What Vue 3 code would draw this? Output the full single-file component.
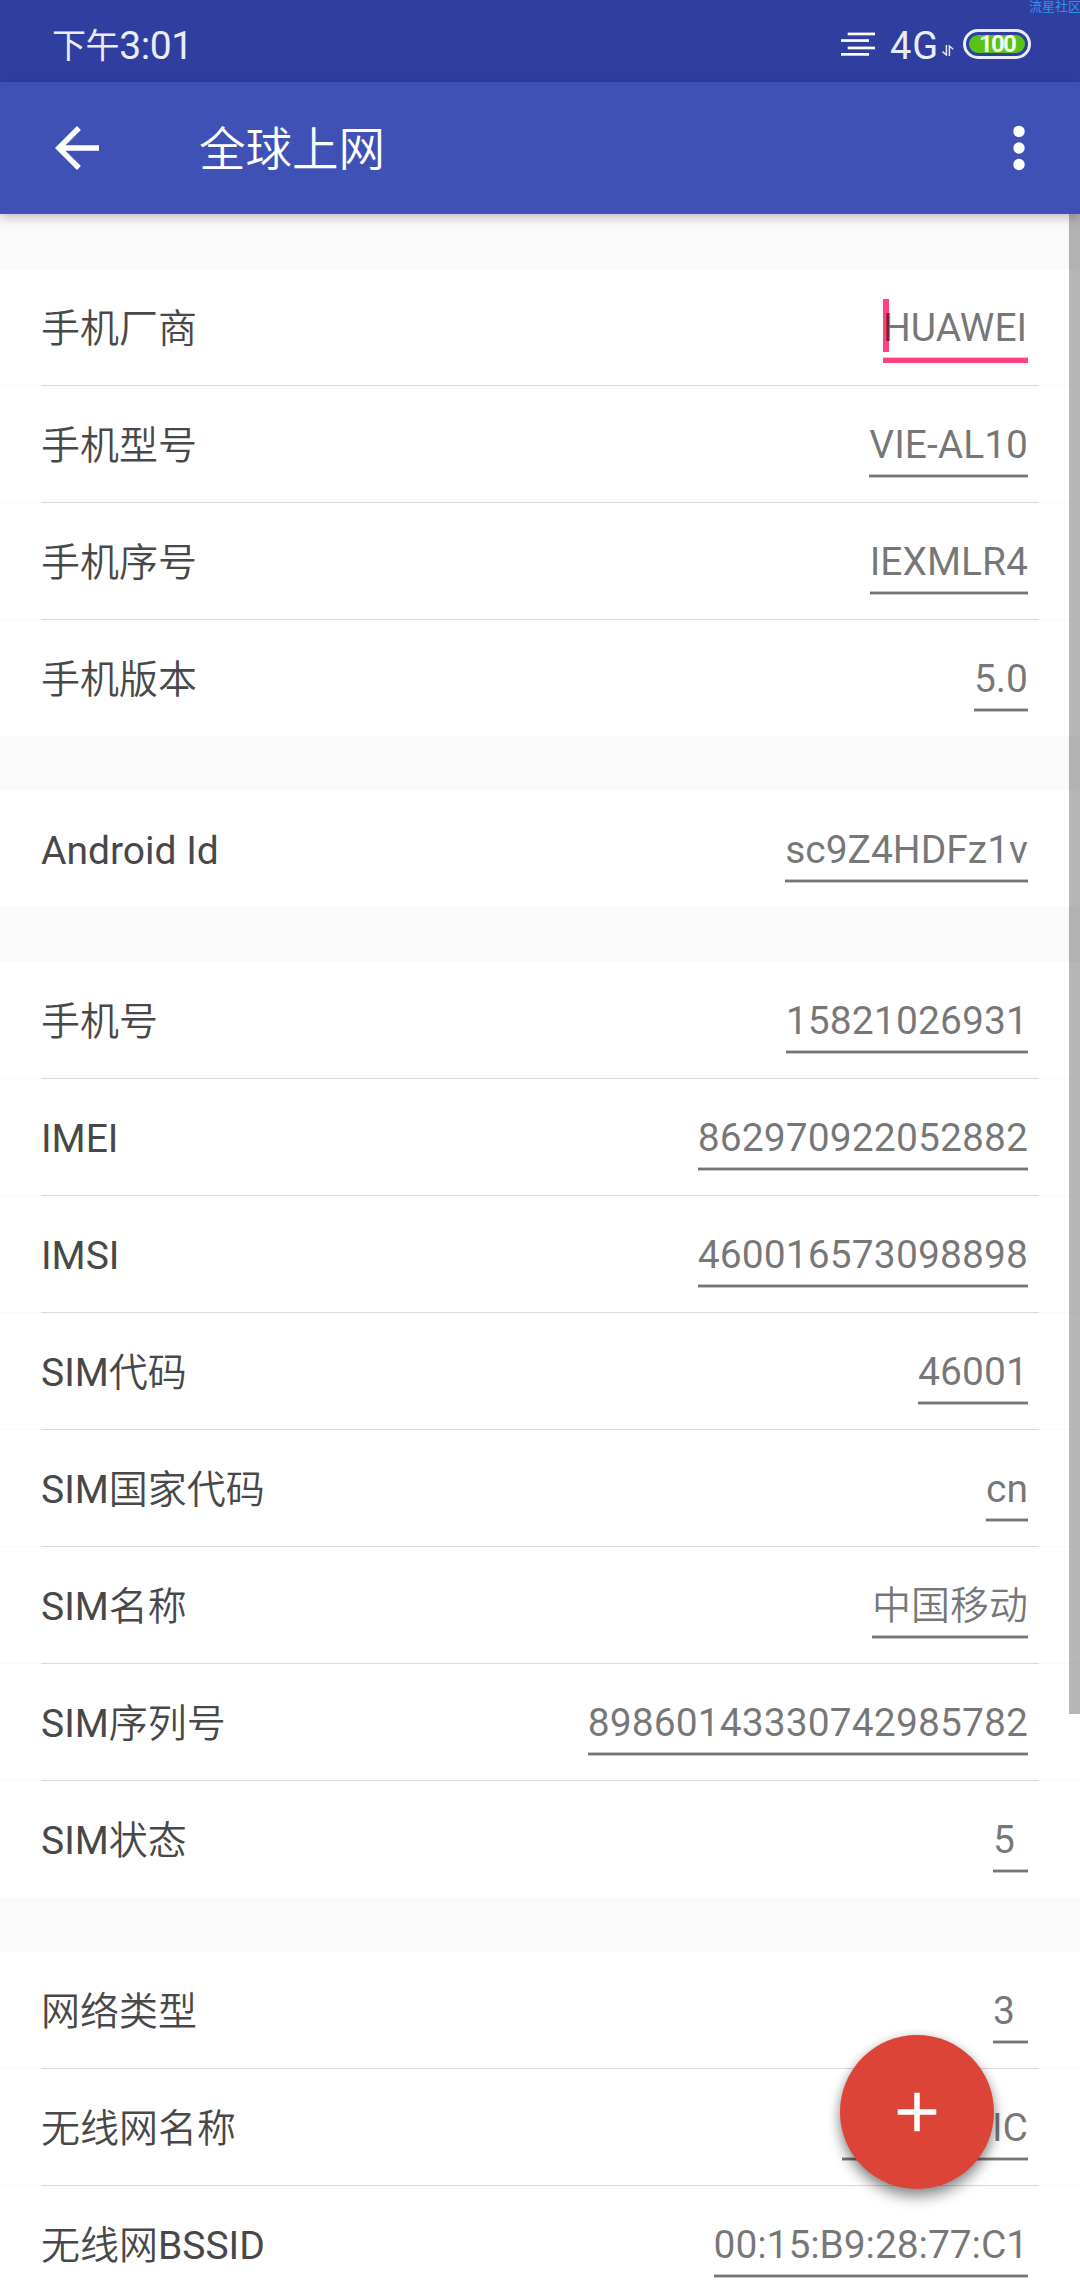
<template>
  <div class="screen">
    <header class="status-bar">
      <div class="clock"><span class="clock-cn">下午</span><span>3:01</span></div>
      <div class="status-icons">
        <svg class="icon-lines" width="34" height="24" viewBox="0 0 34 24" fill="#fff">
          <rect x="6.7" y="0.6" width="27.3" height="2.7" />
          <rect x="0" y="7.2" width="28" height="2.7" />
          <rect x="6.7" y="14.6" width="27.3" height="2.7" />
          <rect x="0" y="21" width="28" height="2.7" />
        </svg>
        <span class="network">4G</span>
        <svg class="icon-data" width="12" height="11" viewBox="0 0 12 11" fill="none" stroke="#e4e6f5" stroke-width="1.5">
          <path d="M4.4 0v10L0.6 6.6M7.4 11V1L11.2 4.2" />
        </svg>
        <div class="battery"><span>100</span></div>
      </div>
      <span class="watermark">流星社区</span>
    </header>

    <nav class="app-bar">
      <button type="button" class="icon-btn" aria-label="Back">
        <svg width="66" height="66" viewBox="0 0 24 24" fill="#fff">
          <path d="M20 11H7.83l5.59-5.59L12 4l-8 8 8 8 1.41-1.41L7.83 13H20v-2z" />
        </svg>
      </button>
      <h1 class="title">全球上网</h1>
      <button type="button" class="icon-btn" aria-label="More">
        <svg width="66" height="66" viewBox="0 0 66 66" fill="#fff">
          <circle cx="33" cy="16.4" r="5.7" />
          <circle cx="33" cy="33" r="5.7" />
          <circle cx="33" cy="49.5" r="5.7" />
        </svg>
      </button>
    </nav>

    <main class="content">
      <section v-for="(group, i) in groups" :key="i" class="group">
        <div v-for="item in group" :key="item.label" class="row">
          <label class="label">{{ item.label }}</label>
          <div class="field" :class="{ focused: item.focused, covered: item.covered }">
            <span class="value" :class="{ numeric: isNumeric(item.value), mac: item.value.includes(':') }">{{ item.value }}</span>
          </div>
        </div>
      </section>
      <div class="scrollbar"></div>
    </main>

    <button type="button" class="fab" aria-label="Add">
      <svg width="66" height="66" viewBox="0 0 24 24" fill="#fff">
        <path d="M19 13h-6v6h-2v-6H5v-2h6V5h2v6h6v2z" />
      </svg>
    </button>
  </div>
</template>

<script setup>
const groups = [
  [
    { label: '手机厂商', value: 'HUAWEI', focused: true },
    { label: '手机型号', value: 'VIE-AL10' },
    { label: '手机序号', value: 'IEXMLR4' },
    { label: '手机版本', value: '5.0' }
  ],
  [
    { label: 'Android Id', value: 'sc9Z4HDFz1v' }
  ],
  [
    { label: '手机号', value: '15821026931' },
    { label: 'IMEI', value: '862970922052882' },
    { label: 'IMSI', value: '460016573098898' },
    { label: 'SIM代码', value: '46001' },
    { label: 'SIM国家代码', value: 'cn' },
    { label: 'SIM名称', value: '中国移动' },
    { label: 'SIM序列号', value: '89860143330742985782' },
    { label: 'SIM状态', value: '5' }
  ],
  [
    { label: '网络类型', value: '3' },
    { label: '无线网名称', value: 'IC', covered: true },
    { label: '无线网BSSID', value: '00:15:B9:28:77:C1' }
  ]
]

const isNumeric = (value) => /^\d+$/.test(value)
</script>

<style>
body {
  margin: 0;
  background: #fafafa;
}
</style>

<style scoped>
.screen {
  position: relative;
  width: 1080px;
  height: 2280px;
  overflow: hidden;
  background: #fafafa;
  font-family: Roboto, "Noto Sans CJK SC DemiLight", "Noto Sans CJK SC", sans-serif;
}
button {
  border: none;
  background: none;
  padding: 0;
}
svg {
  display: block;
}

.status-bar {
  position: relative;
  box-sizing: border-box;
  height: 82px;
  padding: 0 49px 0 52px;
  display: flex;
  justify-content: space-between;
  background: #303f9f;
  color: #eaecf7;
  font-family: Roboto, "Noto Sans CJK SC", sans-serif;
}
.clock {
  display: flex;
  font-size: 39px;
  line-height: 93px;
  letter-spacing: -0.4px;
}
.clock-cn {
  font-size: 34px;
}
.status-icons {
  display: flex;
  align-items: flex-start;
}
.icon-lines {
  margin-top: 32px;
}
.network {
  width: 51px;
  margin-left: 15px;
  font-size: 38px;
  line-height: 92px;
  letter-spacing: 1px;
}
.icon-data {
  margin: 45px 0 0 1px;
}
.battery {
  box-sizing: border-box;
  width: 68px;
  height: 30px;
  margin: 29px 0 0 9px;
  padding: 3px;
  border: 3px solid #eaecf7;
  border-radius: 15px;
}
.battery span {
  display: block;
  height: 18px;
  border-radius: 9px;
  background: #56c21a;
  color: #f3fbe9;
  font-size: 24px;
  font-weight: 700;
  line-height: 19px;
  letter-spacing: -1.8px;
  text-align: center;
}
.watermark {
  position: absolute;
  top: 0;
  left: 1029px;
  font-size: 13px;
  line-height: 13px;
  white-space: nowrap;
  color: #2f93ea;
}

.app-bar {
  position: relative;
  z-index: 1;
  box-sizing: border-box;
  height: 132px;
  padding: 0 28px 0 44px;
  display: flex;
  align-items: center;
  background: #3f51b5;
  box-shadow: 0 3px 11px rgba(0, 0, 0, 0.26);
}
.title {
  flex: 1;
  margin: 0 0 0 89px;
  padding-top: 3px;
  font-size: 46.5px;
  font-weight: 400;
  line-height: 60px;
  color: #fff;
}

.content {
  position: relative;
}
.group {
  padding-top: 55px;
}
.row {
  box-sizing: border-box;
  height: 116px;
  padding: 30px 52px 0 41px;
  display: flex;
  justify-content: space-between;
  background: #fff;
  font-size: 39px;
  line-height: 58px;
}
/* 1px divider, inset on both sides */
.row + .row {
  height: 117px;
  padding-top: 31px;
  background: linear-gradient(to right, #fafafa 41px, #d9d9d9 41px, #d9d9d9 1039px, #fafafa 1039px) top / 100% 1px no-repeat #fff;
}
.label {
  padding-top: 1px;
  color: #484848;
}
.field {
  position: relative;
  min-width: 35px;
  color: rgba(0, 0, 0, 0.54);
}
.field::after {
  content: '';
  display: block;
  height: 4px;
  background: linear-gradient(#c4c4c4 1px, #757575 1px, #757575 3px, #c4c4c4 3px);
}
.value {
  position: relative;
  display: block;
  height: 58px;
}
.value.numeric {
  letter-spacing: 0.1px;
}
.value.mac {
  letter-spacing: -0.1px;
}
.field.focused {
  min-width: 145px;
}
.field.focused::before {
  content: '';
  position: absolute;
  top: 0;
  left: 0;
  width: 6px;
  height: 53px;
  background: #ff4081;
}
.field.focused::after {
  height: 6px;
  background: linear-gradient(#ffb3cd 1px, #ff4081 1px);
}
/* most of this one sits under the floating button */
.field.covered {
  width: 186px;
  text-align: right;
}
.scrollbar {
  position: absolute;
  top: 0;
  right: 0;
  width: 11px;
  height: 1500px;
  background: rgba(0, 0, 0, 0.285);
}

.fab {
  position: absolute;
  right: 86px;
  bottom: 91px;
  width: 154px;
  height: 154px;
  display: flex;
  align-items: center;
  justify-content: center;
  border-radius: 50%;
  background: #db4437;
  box-shadow: 0 8px 14px rgba(0, 0, 0, 0.42), 0 0 10px rgba(0, 0, 0, 0.12);
}
</style>
